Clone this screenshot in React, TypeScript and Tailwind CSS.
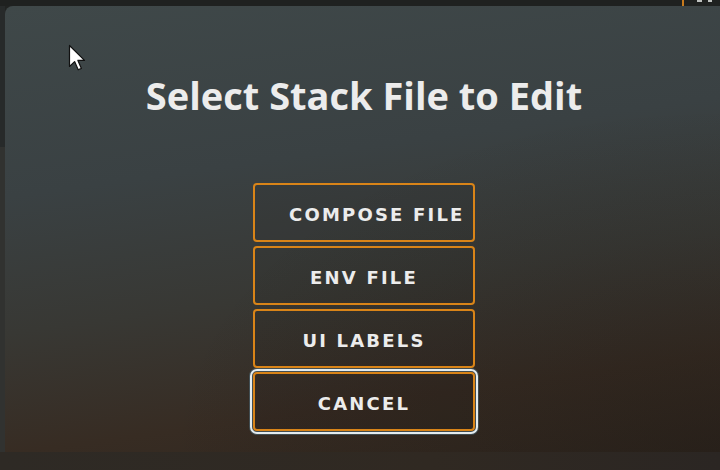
import { useState } from 'react';

const choices = ['COMPOSE FILE', 'ENV FILE', 'UI LABELS'];

function Pointer() {
  return (
    <svg width="18" height="28" viewBox="0 0 18 28" className="absolute left-[68px] top-[44px]">
      <path
        d="M1.5 1.5 L1.5 22.5 L6.6 17.6 L10.2 25.8 L13.4 24.4 L9.9 16.4 L16.5 16.4 Z"
        fill="#ffffff"
        stroke="#111111"
        strokeWidth="1.2"
        strokeLinejoin="round"
      />
    </svg>
  );
}

export default function App() {
  const [picked, setPicked] = useState<string | null>(null);

  return (
    <div className="relative flex h-[470px] w-[720px] flex-col overflow-hidden bg-[#212322] font-['Open_Sans',sans-serif]">
      {/* strip of the page behind the dialog */}
      <div className="relative h-[6px] shrink-0 bg-[#1f2120]">
        <div className="absolute left-[682px] top-0 h-[6px] w-[2px] bg-[#c87a1c]" />
        <div className="absolute left-[697px] top-0 h-[2px] w-[5px] bg-[#bfc2c0]" />
        <div className="absolute left-[708px] top-0 h-[2px] w-[4px] bg-[#bfc2c0]" />
      </div>

      <div className="flex h-[446px] shrink-0">
        <div className="flex w-[5px] shrink-0 flex-col">
          <div className="h-[141px] bg-[#272a2a]" />
          <div className="flex-1 bg-[#313230]" />
        </div>

        <div className="relative w-[718px] shrink-0 rounded-tl-[8px] bg-[linear-gradient(172deg,#3f4849_0%,#3a4143_35%,#383834_60%,#372c23_82%,#30271f_100%)]">
          <div className="absolute inset-0 bg-[radial-gradient(ellipse_at_100%_100%,rgba(20,16,14,0.3),transparent_55%)]" />

          <div className="relative flex flex-col items-center">
            <h1 className="mt-[61px] text-[38px] font-bold leading-[56px] text-[#ececec]">
              Select Stack File to Edit
            </h1>

            <div className="mt-[60px] flex flex-col gap-[4px]">
              {choices.map((label) => (
                <button
                  key={label}
                  onClick={() => setPicked(label)}
                  className={`block h-[59px] w-[222px] whitespace-nowrap rounded-[4px] border-2 border-[#d98418] bg-black/5 px-[34px] pt-[3px] text-center font-['DejaVu_Sans',sans-serif] text-[18px] font-bold tracking-[2.2px] text-[#ececec] ${
                    picked === label ? 'bg-[#d98418]/20' : ''
                  }`}
                >
                  {label}
                </button>
              ))}

              <button
                onClick={() => setPicked(null)}
                className="block h-[59px] w-[222px] rounded-[4px] border-2 border-[#d98418] bg-black/5 px-[34px] pt-[3px] text-center font-['DejaVu_Sans',sans-serif] text-[18px] font-bold tracking-[2.2px] text-[#ececec] outline-2 outline-offset-[1px] outline-[#e4ecef] shadow-[0_0_0_4px_rgba(90,140,170,0.35)]"
              >
                CANCEL
              </button>
            </div>
          </div>
        </div>
      </div>

      <div className="h-[18px] shrink-0 bg-[linear-gradient(90deg,#2e2a25,#302922_60%,#2b2623)]" />

      <Pointer />
    </div>
  );
}
